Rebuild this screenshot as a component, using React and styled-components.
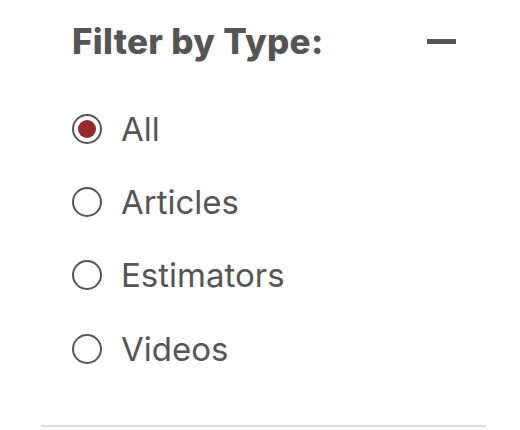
import React, { useState } from "react";
import styled, { createGlobalStyle } from "styled-components";

const Global = createGlobalStyle`
  body {
    margin: 0;
    background: #ffffff;
    font-family: Inter, "Noto Sans", Arial, sans-serif;
  }
`;

const Panel = styled.section`
  width: 445px;
  margin-left: 41px;
  border-bottom: 2px solid #d3dde3;
  padding-bottom: 40px;
`;

const Header = styled.div`
  display: flex;
  align-items: center;
  justify-content: space-between;
  height: 82px;
  padding: 0 30px 0 31px;
`;

const Title = styled.h3`
  margin: 0;
  font-size: 35px;
  font-weight: 800;
  color: #555555;
  letter-spacing: 0.3px;
`;

const Collapse = styled.button`
  width: 29px;
  height: 5px;
  padding: 0;
  border: none;
  background: #555555;
  cursor: pointer;
`;

const List = styled.div`
  padding-top: 10px;
  display: flex;
  flex-direction: column;
`;

const Option = styled.label`
  display: flex;
  align-items: center;
  gap: 19px;
  height: 73.3px;
  padding-left: 31px;
  cursor: pointer;
  font-size: 33px;
  color: #555555;
`;

const Dot = styled.span`
  box-sizing: border-box;
  width: 30px;
  height: 30px;
  border: 2px solid #555555;
  border-radius: 50%;
  display: flex;
  align-items: center;
  justify-content: center;
  flex-shrink: 0;

  &::after {
    content: "";
    width: 18px;
    height: 18px;
    border-radius: 50%;
    background: ${(p) => (p.$checked ? "#962a2a" : "transparent")};
  }
`;

const types = ["All", "Articles", "Estimators", "Videos"];

export default function App() {
  const [selected, setSelected] = useState("All");
  return (
    <>
      <Global />
      <Panel>
        <Header>
          <Title>Filter by Type:</Title>
          <Collapse aria-label="Collapse" />
        </Header>
        <List>
          {types.map((t) => (
            <Option key={t} onClick={() => setSelected(t)}>
              <Dot $checked={selected === t} />
              {t}
            </Option>
          ))}
        </List>
      </Panel>
    </>
  );
}
